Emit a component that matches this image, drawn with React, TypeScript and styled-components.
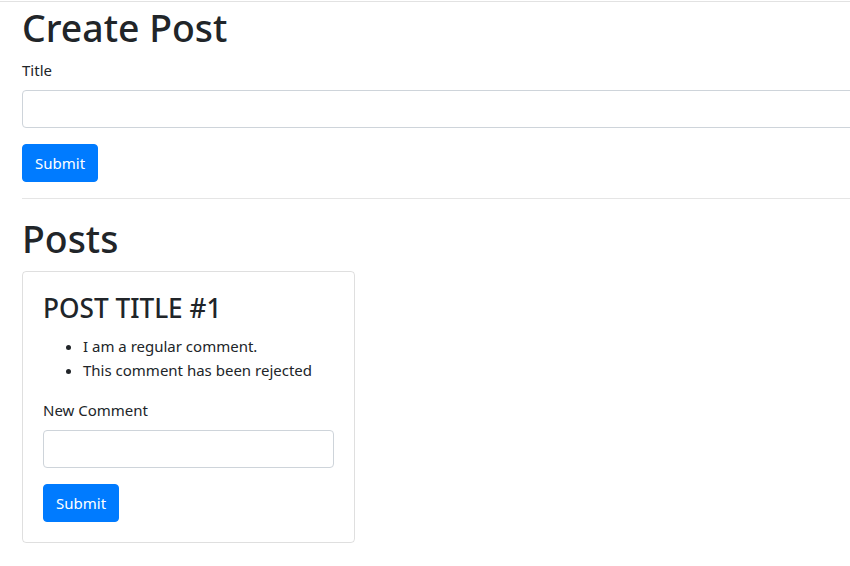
import React from "react";
import styled, { createGlobalStyle } from "styled-components";

const GlobalStyle = createGlobalStyle`
  html, body {
    margin: 0;
    padding: 0;
    overflow: hidden;
    background: #fff;
  }
  body {
    font-family: "Noto Sans", "Open Sans", sans-serif;
    font-size: 15px;
    line-height: 24px;
    color: #212529;
  }
  * { box-sizing: border-box; }
`;

const Page = styled.div`
  margin-top: 1px;
  border-top: 1px solid #e2e2e2;
  width: 1200px;
`;

const Container = styled.div`
  padding: 0 22px;
`;

const PageTitle = styled.h1<{ $lead?: boolean }>`
  margin: 0 0 ${(p) => (p.$lead ? "6px" : "8px")};
  padding-top: ${(p) => (p.$lead ? "2px" : "0")};
  font-size: 37.4px;
  font-weight: 500;
  line-height: 48px;
`;

const FormGroup = styled.div`
  margin-bottom: 16px;
`;

const Label = styled.label`
  display: inline-block;
  margin-bottom: 8px;
`;

const Input = styled.input`
  display: block;
  width: 100%;
  height: 38px;
  padding: 6px 12px;
  font: inherit;
  color: #495057;
  background: #fff;
  border: 1px solid #ced4da;
  border-radius: 4px;
  outline: none;
`;

const Button = styled.button`
  display: inline-block;
  font: inherit;
  line-height: 24px;
  color: #fff;
  background: #007bff;
  border: 1px solid #007bff;
  border-radius: 4px;
  padding: 6px 12px;
  cursor: pointer;
`;

const Rule = styled.hr`
  margin: 16px 0;
  border: 0;
  border-top: 1px solid rgba(0, 0, 0, 0.1);
`;

const Card = styled.div`
  width: 333px;
  border: 1px solid rgba(0, 0, 0, 0.125);
  border-radius: 4px;
  padding: 20px;
`;

const CardTitle = styled.h3`
  margin: 0 0 8px;
  font-size: 26.2px;
  font-weight: 500;
  line-height: 33.6px;
`;

const CommentList = styled.ul`
  margin: 0 0 16px;
  padding-left: 40px;
`;

type Post = { id: number; title: string; comments: string[] };

const posts: Post[] = [
  {
    id: 1,
    title: "POST TITLE #1",
    comments: ["I am a regular comment.", "This comment has been rejected"],
  },
];

export default function App() {
  return (
    <>
      <GlobalStyle />
      <Page>
        <Container>
          <PageTitle $lead>Create Post</PageTitle>
          <form onSubmit={(e) => e.preventDefault()}>
            <FormGroup>
              <Label>Title</Label>
              <Input type="text" />
            </FormGroup>
            <Button type="submit">Submit</Button>
          </form>
          <Rule />
          <PageTitle>Posts</PageTitle>
          {posts.map((p) => (
            <Card key={p.id}>
              <CardTitle>{p.title}</CardTitle>
              <CommentList>
                {p.comments.map((c) => (
                  <li key={c}>{c}</li>
                ))}
              </CommentList>
              <form onSubmit={(e) => e.preventDefault()}>
                <FormGroup>
                  <Label>New Comment</Label>
                  <Input type="text" />
                </FormGroup>
                <Button type="submit">Submit</Button>
              </form>
            </Card>
          ))}
        </Container>
      </Page>
    </>
  );
}
